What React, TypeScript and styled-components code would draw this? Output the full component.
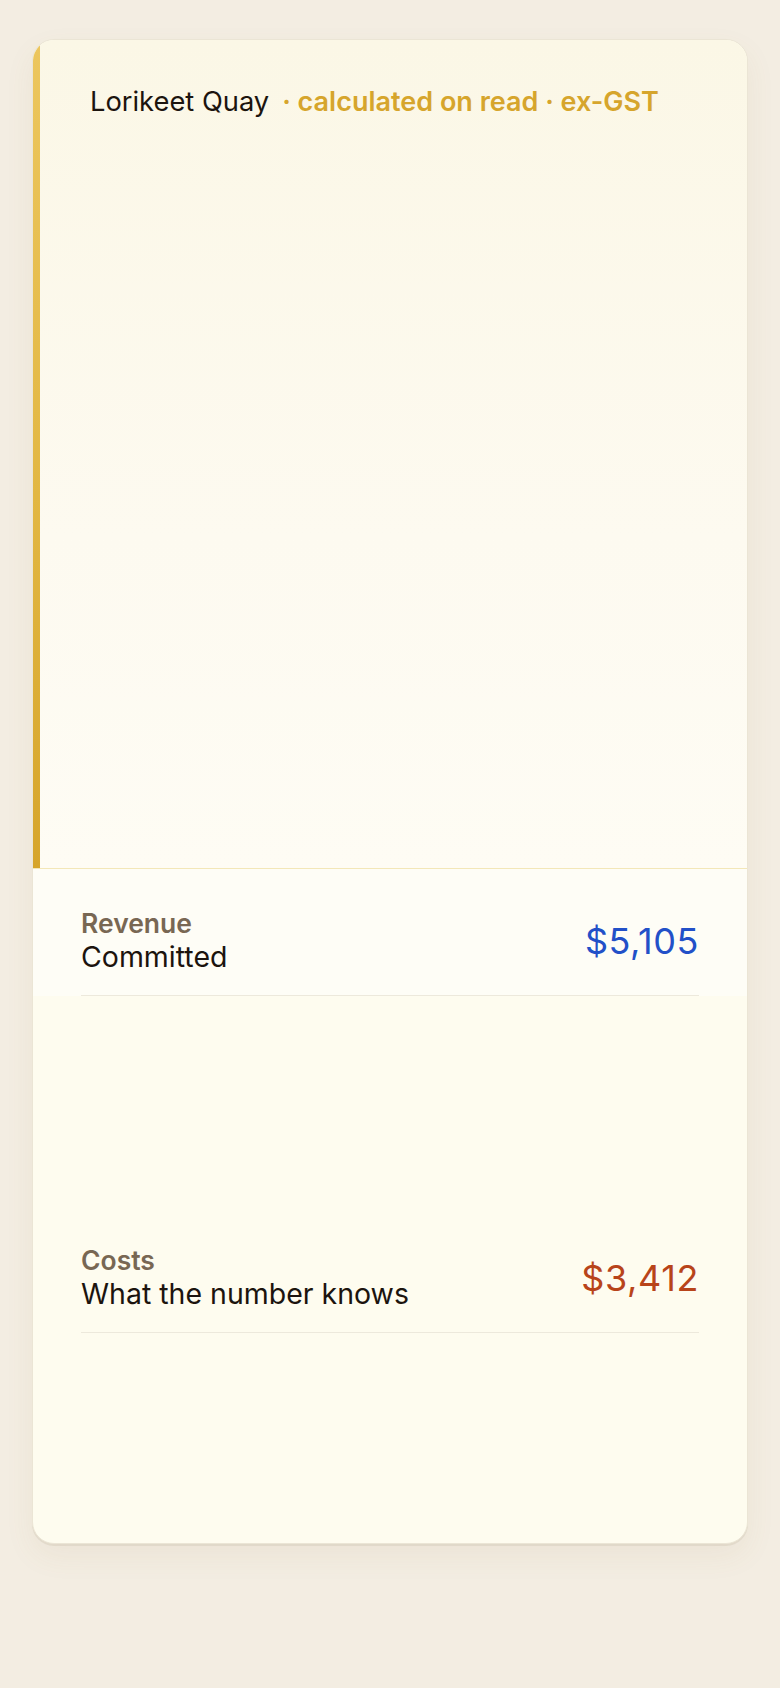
import styled, { createGlobalStyle } from 'styled-components';

const GlobalStyle = createGlobalStyle`
	html, body {
		margin: 0;
		padding: 0;
		background: #f3ede2;
	}
	body {
		font-family: Inter, "Noto Sans", "Liberation Sans", sans-serif;
		color: #1c140e;
		-webkit-font-smoothing: antialiased;
	}
`;

const Page = styled.div`
	min-height: 1688px;
	padding: 39px 32px 0;
	box-sizing: border-box;
`;

const Card = styled.div`
	border: 1px solid #ebe5d5;
	border-radius: 22px;
	overflow: hidden;
	background: #fefcef;
	box-shadow:
		0 2px 0 rgba(170, 160, 135, 0.18),
		0 12px 30px rgba(140, 115, 60, 0.07);
`;

const Header = styled.div`
	height: 829px;
	padding: 44px 0 0 57px;
	box-sizing: border-box;
	border-bottom: 1px solid #f3e7b8;
	background:
		linear-gradient(180deg, #ecc65e 0%, #e2b743 55%, #d6a52b 100%) left top / 7px 100% no-repeat,
		linear-gradient(180deg, #fbf7e6 0%, #fdfaf0 60%, #fefcf4 100%);
`;

const Title = styled.div`
	display: flex;
	align-items: baseline;
	gap: 13px;
	line-height: 35px;
`;

const Place = styled.span`
	font-size: 27.3px;
	font-weight: 400;
	color: #1c140e;
`;

const Meta = styled.span`
	font-size: 27px;
	font-weight: 600;
	color: #d6a52c;
`;

const Section = styled.div`
	display: flex;
	flex-direction: column;
`;

const RowWrap = styled.div<{ $lit?: boolean }>`
	padding: 0 48px;
	background: ${(p) => (p.$lit ? '#fefdf6' : 'transparent')};
`;

const Row = styled.div`
	display: flex;
	align-items: center;
	justify-content: space-between;
	padding: 39px 0 21px;
	border-bottom: 1px solid #ede9dc;
`;

const RowText = styled.div`
	display: flex;
	flex-direction: column;
`;

const Label = styled.div`
	font-size: 26.5px;
	line-height: 31px;
	font-weight: 600;
	color: #786753;
`;

const Sub = styled.div`
	font-size: 28.5px;
	line-height: 34px;
	margin-top: 1px;
	color: #1c140e;
`;

const Amount = styled.div<{ $tone: 'revenue' | 'costs' }>`
	font-size: 36px;
	font-weight: 400;
	color: ${(p) => (p.$tone === 'revenue' ? '#2250c8' : '#b8441a')};
	letter-spacing: 0.6px;
`;

const Body = styled.div<{ $h: number }>`
	height: ${(p) => p.$h}px;
`;

const rows = [
	{ label: 'Revenue', sub: 'Committed', amount: '$5,105', tone: 'revenue' as const, space: 210, lit: true },
	{ label: 'Costs', sub: 'What the number knows', amount: '$3,412', tone: 'costs' as const, space: 210, lit: false },
];

export default function App() {
	return (
		<>
			<GlobalStyle />
			<Page>
				<Card>
					<Header>
						<Title>
							<Place>Lorikeet Quay</Place>
							<Meta>· calculated on read · ex-GST</Meta>
						</Title>
					</Header>
					{rows.map((r) => (
						<Section key={r.label}>
							<RowWrap $lit={r.lit}>
								<Row>
									<RowText>
										<Label>{r.label}</Label>
										<Sub>{r.sub}</Sub>
									</RowText>
									<Amount $tone={r.tone}>{r.amount}</Amount>
								</Row>
							</RowWrap>
							<Body $h={r.space} />
						</Section>
					))}
				</Card>
			</Page>
		</>
	);
}
